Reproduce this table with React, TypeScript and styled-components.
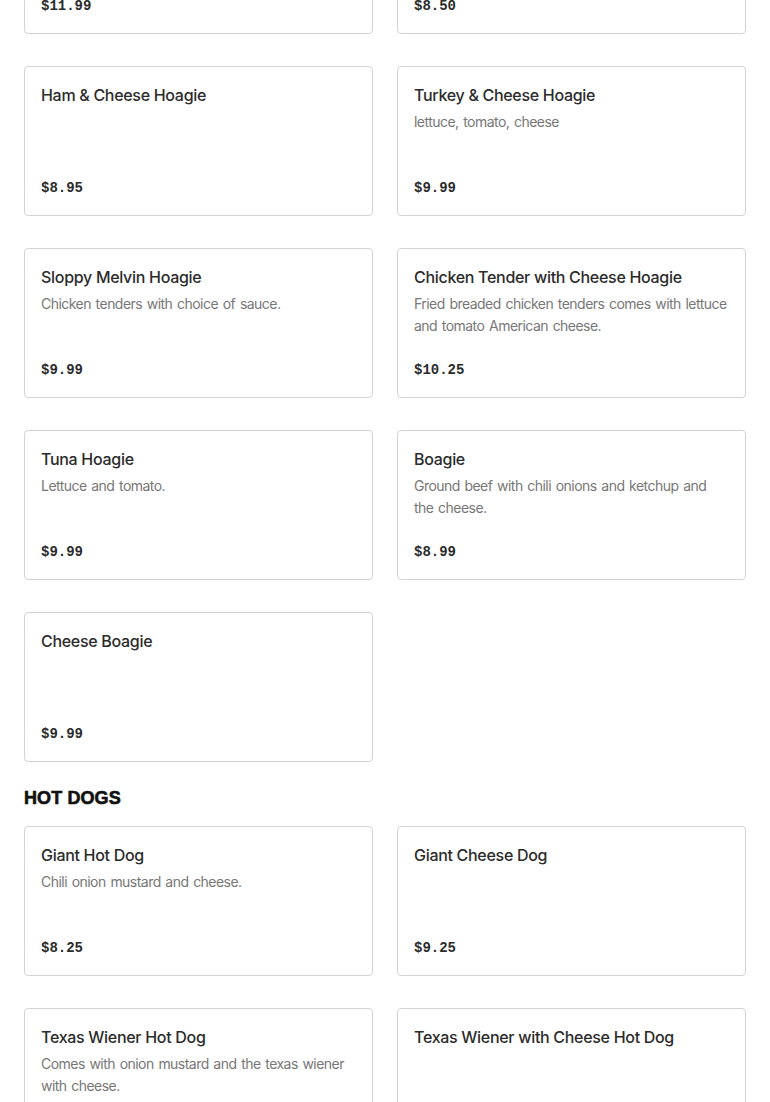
import React from 'react';
import styled, { createGlobalStyle } from 'styled-components';

const GlobalStyle = createGlobalStyle`
  html, body {
    margin: 0;
    padding: 0;
    background: #ffffff;
  }
  body {
    font-family: Inter, "Liberation Sans", sans-serif;
    color: #2b2b2b;
  }
`;

interface MenuItem {
  name: string;
  description?: string;
  price: string;
}

interface MenuSection {
  title?: string;
  items: MenuItem[];
}

const SECTIONS: MenuSection[] = [
  {
    items: [
      { name: 'Italian Hoagie', price: '$11.99' },
      { name: 'Steak Hoagie', price: '$8.50' },
      { name: 'Ham & Cheese Hoagie', price: '$8.95' },
      { name: 'Turkey & Cheese Hoagie', description: 'lettuce, tomato, cheese', price: '$9.99' },
      { name: 'Sloppy Melvin Hoagie', description: 'Chicken tenders with choice of sauce.', price: '$9.99' },
      {
        name: 'Chicken Tender with Cheese Hoagie',
        description: 'Fried breaded chicken tenders comes with lettuce and tomato American cheese.',
        price: '$10.25',
      },
      { name: 'Tuna Hoagie', description: 'Lettuce and tomato.', price: '$9.99' },
      { name: 'Boagie', description: 'Ground beef with chili onions and ketchup and the cheese.', price: '$8.99' },
      { name: 'Cheese Boagie', price: '$9.99' },
    ],
  },
  {
    title: 'HOT DOGS',
    items: [
      { name: 'Giant Hot Dog', description: 'Chili onion mustard and cheese.', price: '$8.25' },
      { name: 'Giant Cheese Dog', price: '$9.25' },
      {
        name: 'Texas Wiener Hot Dog',
        description: 'Comes with onion mustard and the texas wiener with cheese.',
        price: '$8.75',
      },
      { name: 'Texas Wiener with Cheese Hot Dog', price: '$9.75' },
    ],
  },
];

// the screenshot is scrolled part-way into the menu
const Page = styled.main`
  padding: 0 24px 24px;
  margin-top: -116px;
`;

const Section = styled.section`
  & + & {
    margin-top: 24px;
  }
`;

const SectionTitle = styled.h2`
  margin: 0 0 16px 0;
  font-family: "Liberation Sans", Arial, sans-serif;
  font-weight: 900;
  font-size: 18px;
  line-height: 24px;
  letter-spacing: 0.1px;
  color: #111111;
  -webkit-text-stroke: 0.6px #111111;
`;

const Grid = styled.div`
  display: grid;
  grid-template-columns: 1fr 1fr;
  column-gap: 24px;
  row-gap: 32px;
`;

const Card = styled.article`
  display: flex;
  flex-direction: column;
  min-height: 150px;
  box-sizing: border-box;
  padding: 17px 16px 17px;
  border: 1px solid #d3d3d3;
  border-radius: 4px;
  background: #ffffff;
`;

const ItemName = styled.h3`
  margin: 0;
  font-size: 16px;
  line-height: 22px;
  font-weight: 500;
  letter-spacing: -0.3px;
  color: #2b2b2b;
`;

const ItemDescription = styled.p`
  margin: 5px 0 0 0;
  font-size: 14px;
  line-height: 22px;
  letter-spacing: -0.54px;
  word-spacing: 1.3px;
  color: #777777;
`;

const Price = styled.span`
  margin-top: auto;
  font-family: "Liberation Mono", "DejaVu Sans Mono", monospace;
  font-weight: 700;
  font-size: 14px;
  line-height: 20px;
  color: #2b2b2b;
`;

export default function App() {
  return (
    <>
      <GlobalStyle />
      <Page>
        {SECTIONS.map((section, si) => (
          <Section key={si}>
            {section.title && <SectionTitle>{section.title}</SectionTitle>}
            <Grid>
              {section.items.map((item) => (
                <Card key={item.name}>
                  <ItemName>{item.name}</ItemName>
                  {item.description && <ItemDescription>{item.description}</ItemDescription>}
                  <Price>{item.price}</Price>
                </Card>
              ))}
            </Grid>
          </Section>
        ))}
      </Page>
    </>
  );
}
